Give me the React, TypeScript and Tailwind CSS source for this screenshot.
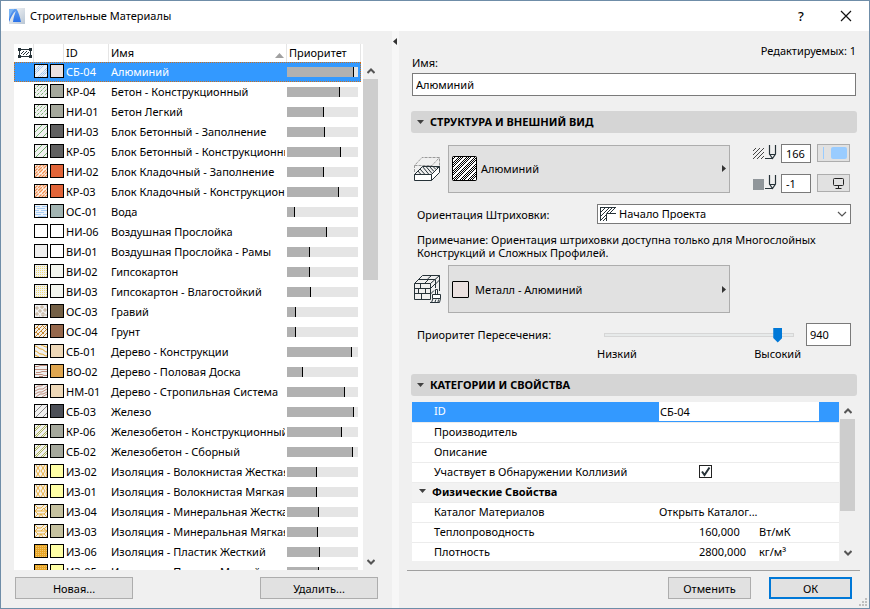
import React, { useState } from 'react';

type HatchKind =
  | 'metal' | 'concrete' | 'block' | 'brick' | 'water' | 'empty' | 'plain' | 'dots' | 'gravel'
  | 'soil' | 'timber' | 'floor' | 'rafter' | 'iron' | 'reinforced' | 'fiber' | 'mineral' | 'plastic';

const HATCHES: Record<HatchKind, { bg: string; ink: string; d: string; width?: number; dash?: string }> = {
  metal: { bg: '#eef2f8', ink: '#8dbcf0', d: 'M-1 6L6 -1M-1 8L8 -1M-1 10L10 -1M2 13L13 2M4 13L13 4M6 13L13 6M10 13L13 10', dash: '1.4 .5' },
  concrete: { bg: '#f0f0f0', ink: '#5aa04c', d: 'M-1 5L5 -1M-1 9L9 -1M-1 13L13 -1M3 13L13 3M7 13L13 7', dash: '3 1.4', width: 0.8 },
  block: { bg: '#f0f0f0', ink: '#4f9e48', d: 'M0 7L7 0M1 12L12 1M8 12L12 8', width: 0.8 },
  brick: { bg: '#fdf1e8', ink: '#f08a4b', d: 'M-1 4L4 -1M-1 7L7 -1M-1 10L10 -1M0 12L12 0M3 13L13 3M6 13L13 6M9 13L13 9', dash: '5 1', width: 1.2 },
  water: { bg: '#edf3fa', ink: '#a8cef6', d: 'M0 1.5H5M7 1.5H12M2 3.5H10M0 5.5H4M6 5.5H12M1 7.5H9M0 9.5H6M8 9.5H12M3 11.5H11' },
  empty: { bg: '#ffffff', ink: '#ffffff', d: '' },
  plain: { bg: '#efefef', ink: '#efefef', d: '' },
  dots: { bg: '#f2f2ee', ink: '#f0d75c', d: 'M1 1.5H12M1 3.5H12M1 5.5H12M1 7.5H12M1 9.5H12M1 11.5H12', dash: '1 1', width: 0.8 },
  gravel: { bg: '#f0f0f0', ink: '#b9a288', d: 'M1 2h2v2h-2zM6 1h2v2h-2zM9 4h2v2h-2zM4 5h2v2h-2zM1 8h2v2h-2zM7 8h2v3h-2zM4 11h1M11 1h1M11 9v2', width: 0.8 },
  soil: { bg: '#f5efe6', ink: '#c07a1c', d: 'M0 4L4 0M0 8L8 0M0 12L12 0M4 12L12 4M8 12L12 8M2 2l3 3M6 6l3 3M8 1l3 3M1 7l3 3', width: 0.9 },
  timber: { bg: '#f0f0f0', ink: '#eaa92b', d: 'M0 1c3 0 3 3 6 3s3 3 6 3M0 6c3 0 3 3 6 3s3 2 6 2M6 0c2 0 3 2 6 2M0 10l4 2' },
  floor: { bg: '#f0f0f0', ink: '#b98272', d: 'M0 1.5h3l2-1h7M0 4.5h12M1 7.5h4l2-1h5M0 9.5h7l2 1h3M4 11.5h4', width: 0.9 },
  rafter: { bg: '#f0f0f0', ink: '#b98272', d: 'M0 3l3-2h3l2-1M0 6l4-2h4l4-3M0 9l4-2h3l5-3M1 12l4-3h3l4-2M7 12l5-3', width: 0.9 },
  iron: { bg: '#f0f0f0', ink: '#707070', d: 'M0 7L7 0M1 12L12 1M8 12L12 8', width: 0.8 },
  reinforced: { bg: '#f0f0f0', ink: '#8f9c20', d: 'M0 4L4 0M0 6L6 0M0 11L11 0M1 12L12 1M6 12L12 6M8 12L12 8', width: 0.7 },
  fiber: { bg: '#f5f0e6', ink: '#e9ab36', d: 'M1 0l2 3-2 3 2 3-2 3M5 0l-2 3 2 3-2 3 2 3M6 0l2 3-2 3 2 3-2 3M10 0l-2 3 2 3-2 3 2 3M12 0l-1 3 1 3-1 3 1 3', width: 0.9 },
  mineral: { bg: '#f5f0e6', ink: '#e9ab36', d: 'M0 0l3 3h3l3-3M12 1L9 4l3 2M0 6l3-3M0 6h12M3 9L0 6M3 9h6l3-3M3 9l-3 3M9 9l3 3M6 6l3-3M4 12l2-3 2 3', width: 0.9 },
  plastic: { bg: '#e8a628', ink: '#f6dc9a', d: 'M1 1.5H12M1 3.5H12M1 5.5H12M1 7.5H12M1 9.5H12M1 11.5H12', dash: '1 1', width: 0.6 },
};

type Material = { id: string; name: string; hatch: HatchKind; surface: string; priority: number };

const MATERIALS: Material[] = [
  { id: 'СБ-04', name: 'Алюминий', hatch: 'metal', surface: '#ebe1e0', priority: 94 },
  { id: 'КР-04', name: 'Бетон - Конструкционный', hatch: 'concrete', surface: '#a5a89c', priority: 75 },
  { id: 'НИ-01', name: 'Бетон Легкий', hatch: 'concrete', surface: '#a5a89c', priority: 52 },
  { id: 'НИ-03', name: 'Блок Бетонный - Заполнение', hatch: 'block', surface: '#606060', priority: 54 },
  { id: 'КР-05', name: 'Блок Бетонный - Конструкционный', hatch: 'block', surface: '#606060', priority: 76 },
  { id: 'НИ-02', name: 'Блок Кладочный - Заполнение', hatch: 'brick', surface: '#e06438', priority: 52 },
  { id: 'КР-03', name: 'Блок Кладочный - Конструкционный', hatch: 'brick', surface: '#e06438', priority: 73 },
  { id: 'ОС-01', name: 'Вода', hatch: 'water', surface: '#a2b4b2', priority: 11 },
  { id: 'НИ-06', name: 'Воздушная Прослойка', hatch: 'empty', surface: '#ffffff', priority: 56 },
  { id: 'ВИ-01', name: 'Воздушная Прослойка - Рамы', hatch: 'plain', surface: '#ffffff', priority: 32 },
  { id: 'ВИ-02', name: 'Гипсокартон', hatch: 'dots', surface: '#f3f5ee', priority: 32 },
  { id: 'ВИ-03', name: 'Гипсокартон - Влагостойкий', hatch: 'dots', surface: '#f3f5ee', priority: 34 },
  { id: 'ОС-03', name: 'Гравий', hatch: 'gravel', surface: '#735f45', priority: 13 },
  { id: 'ОС-04', name: 'Грунт', hatch: 'soil', surface: '#96684c', priority: 13 },
  { id: 'СБ-01', name: 'Дерево - Конструкции', hatch: 'timber', surface: '#eed8b8', priority: 92 },
  { id: 'ВО-02', name: 'Дерево - Половая Доска', hatch: 'floor', surface: '#dfa650', priority: 23 },
  { id: 'НМ-01', name: 'Дерево - Стропильная Система', hatch: 'rafter', surface: '#eed8b8', priority: 82 },
  { id: 'СБ-03', name: 'Железо', hatch: 'iron', surface: '#4c4f57', priority: 94 },
  { id: 'КР-06', name: 'Железобетон - Конструкционный', hatch: 'reinforced', surface: '#a5a89c', priority: 78 },
  { id: 'СБ-02', name: 'Железобетон - Сборный', hatch: 'reinforced', surface: '#a5a89c', priority: 93 },
  { id: 'ИЗ-02', name: 'Изоляция - Волокнистая Жесткая', hatch: 'fiber', surface: '#ffffa6', priority: 42 },
  { id: 'ИЗ-01', name: 'Изоляция - Волокнистая Мягкая', hatch: 'fiber', surface: '#ffffa6', priority: 42 },
  { id: 'ИЗ-04', name: 'Изоляция - Минеральная Жесткая', hatch: 'mineral', surface: '#c6c2a0', priority: 45 },
  { id: 'ИЗ-03', name: 'Изоляция - Минеральная Мягкая', hatch: 'mineral', surface: '#c6c2a0', priority: 44 },
  { id: 'ИЗ-06', name: 'Изоляция - Пластик Жесткий', hatch: 'plastic', surface: '#ffffa6', priority: 47 },
  { id: 'ИЗ-05', name: 'Изоляция - Пластик Мягкий', hatch: 'plastic', surface: '#ffffa6', priority: 45 },
];

function HatchSwatch({ kind }: { kind: HatchKind }) {
  const h = HATCHES[kind];
  return (
    <svg viewBox="0 0 12 12" className="size-[14px] shrink-0 border border-black" style={{ background: h.bg }} aria-hidden="true">
      <path d={h.d} fill="none" stroke={h.ink} strokeWidth={h.width ?? 1} strokeDasharray={h.dash} />
    </svg>
  );
}

function TitleLogo() {
  return (
    <svg viewBox="0 0 16 16" className="size-4" aria-hidden="true">
      <defs>
        <linearGradient id="logoBg" x1="0" y1="0" x2="1" y2="1">
          <stop offset="0" stopColor="#fbfbfb" />
          <stop offset="1" stopColor="#b9c6d4" />
        </linearGradient>
        <linearGradient id="logoBlue" x1="0" y1="0" x2="0" y2="1">
          <stop offset="0" stopColor="#5f9ff0" />
          <stop offset="1" stopColor="#2b72e8" />
        </linearGradient>
      </defs>
      <rect width="16" height="16" fill="url(#logoBg)" />
      <path d="M0 1h5C2.500 4 1 8 0 13z" fill="#79b4f4" />
      <path d="M5 1h2.500C9.500 4 11 9 12 14H4C4.500 9 6 5 7 3 4 5 2 9 0 14V11C1 7 3 3 5 1z" fill="url(#logoBlue)" />
    </svg>
  );
}

function FillColumnIcon() {
  return (
    <svg viewBox="0 0 14 12" className="h-3 w-[14px]" fill="none" stroke="#263238" aria-hidden="true">
      <path d="M1 2.500H13M1 9.500H13M1.500 2V10M12.500 2V10" />
      <path d="M0 1h3v3H0zM11 1h3v3h-3zM0 8h3v3H0zM11 8h3v3h-3z" fill="#263238" stroke="none" />
      <path d="M3 7L6 4M5 8L9 4M8 8L11 5" />
    </svg>
  );
}

function CutFillIcon() {
  return (
    <svg viewBox="1 0 26 26" className="size-[26px] shrink-0" fill="none" stroke="#263238" aria-hidden="true">
      <path d="M1.500 16V9.500L9 1.500H26.500V10M1.500 9.500H19L26.500 1.500M19 9.500V13" stroke="#9a9a9a" strokeDasharray="3 1" />
      <path d="M1.500 18.500H18.500V24.500H1.500zM18.500 18.500L26.500 10.500V16.500L18.500 24.500" fill="#fff" />
      <path d="M1.500 18.500L9.500 10.500H26.500L18.500 18.500z" fill="#f0f0f0" />
      <path d="M5 15L8 18.500M7 13L12 18.500M9.500 10.500L16 18.500M13 10.500L19 17.500M16.500 10.500L21 15.500M20 10.500L23 13.500M23 10.500L25 12" />
    </svg>
  );
}

function SurfaceIcon() {
  return (
    <svg viewBox="1 0 27 30" className="h-[30px] w-[27px] shrink-0" fill="none" stroke="#263238" aria-hidden="true">
      <path d="M1.500 9.500H17.500V25.500H1.500zM1.500 9.500L9.500 1.500H26.500L17.500 9.500M1.500 14.500H17.500M1.500 19.500H17.500M7.500 9.500V14.500M12.500 14.500V19.500M5.500 14.500V19.500M8.500 19.500V25.500M5.500 5.500H22M12 9L15.500 5.500M14.500 5L18 2M26.500 1.500V17M17.500 14.500L22 10M22.500 5.500V14M22 10.500L26.500 6M17.500 20L21 16.500" />
      <path d="M22.500 20V15.500H24.500V20M19.500 20.500H27.500V24.500H19.500zM20 24.500L18.500 28.500M17 28.500H26.500L27.500 24.500M22 28L23 25.500M25 28L25.500 25.500" fill="#fff" />
    </svg>
  );
}

function PenIcon({ solid }: { solid?: boolean }) {
  return (
    <svg viewBox="0 0 24 16" className="h-4 w-6 shrink-0" fill="none" stroke="#263238" aria-hidden="true">
      {solid ? (
        <path d="M0 5h11v11H0z" fill="#90969a" stroke="none" />
      ) : (
        <path d="M0 7L3 4M0 11L7 4M0 15L11 4M4 15L11 8M8 15L11 12" stroke="#444" />
      )}
      <path d="M16.500 1V10L19.500 14.500L22.500 10V1M16.500 10.500H22.500M12 14.500H19.500" strokeWidth="1.200" />
    </svg>
  );
}

function Chevron({ dir }: { dir: 'up' | 'down' }) {
  return (
    <svg viewBox="0 0 8 6" className="h-[6px] w-2" fill="none" stroke="#555" strokeWidth="2" aria-hidden="true">
      <path d={dir === 'up' ? 'M.5 5L4 1.500L7.500 5' : 'M.5 1L4 4.500L7.500 1'} />
    </svg>
  );
}

function ScrollBar({ thumb, className }: { thumb: string; className: string }) {
  return (
    <div className={`flex w-[15px] shrink-0 flex-col bg-[#f0f0f0] ${className}`}>
      <button type="button" aria-label="Прокрутить вверх" className="flex h-[17px] shrink-0 items-center justify-center">
        <Chevron dir="up" />
      </button>
      <div className="min-h-0 flex-1">
        <div className={`bg-[#cdcdcd] ${thumb}`} />
      </div>
      <button type="button" aria-label="Прокрутить вниз" className="flex h-[17px] shrink-0 items-center justify-center">
        <Chevron dir="down" />
      </button>
    </div>
  );
}

function PushButton({ children, className }: { children: React.ReactNode; className: string }) {
  return (
    <button type="button" className={`flex h-[22px] items-center justify-center bg-[#e1e1e1] ${className}`}>
      {children}
    </button>
  );
}

function SectionHeader({ children }: { children: React.ReactNode }) {
  return (
    <h2>
      <button type="button" className="flex h-[22px] w-full items-center gap-[6px] rounded-[3px] bg-[#d5d5d5] px-[6px] pb-px text-left font-bold">
        <svg viewBox="0 0 7 4" className="h-1 w-[7px]" aria-hidden="true"><path d="M0 0h7L3.500 4z" fill="#404040" /></svg>
        {children}
      </button>
    </h2>
  );
}

function RightArrow() {
  return (
    <svg viewBox="0 0 4 7" className="h-[7px] w-1" aria-hidden="true"><path d="M0 0v7L4 3.500z" fill="#333" /></svg>
  );
}

function MaterialList({ selected, onSelect }: { selected: string; onSelect: (id: string) => void }) {
  return (
    <div className="flex min-h-0 flex-1">
      <div className="min-w-0 flex-1 overflow-hidden bg-white">
        <table className="w-[347px] table-fixed border-collapse">
          <colgroup>
            <col className="w-[19px]" />
            <col className="w-[30px]" />
            <col className="w-[45px]" />
            <col className="w-[178px]" />
            <col className="w-[75px]" />
          </colgroup>
          <thead>
            <tr className="h-[18px] text-left [&>th]:p-0 [&>th]:font-normal">
              <th aria-label="Штриховка"><div className="flex justify-end pr-px"><FillColumnIcon /></div></th>
              <th aria-label="Образец"><div className="h-[18px] border-l border-[#e5e5e5]" /></th>
              <th><div className="flex h-[18px] items-center border-l border-[#e5e5e5] pb-px pl-[2px]">ID</div></th>
              <th>
                <div className="flex h-[18px] items-center justify-between border-l border-[#e5e5e5] pr-[2px] pb-px pl-[2px]">
                  Имя
                  <svg viewBox="0 0 9 5" className="mt-[6px] h-[5px] w-[9px]" aria-hidden="true"><path d="M0 5h9L4.500 0z" fill="#a0a0a0" /></svg>
                </div>
              </th>
              <th><div className="flex h-[18px] items-center border-x border-[#e5e5e5] pb-px pl-[2px]">Приоритет</div></th>
            </tr>
          </thead>
          <tbody>
            {MATERIALS.map((m) => {
              const active = m.id === selected;
              return (
                <tr
                  key={m.id}
                  onClick={() => onSelect(m.id)}
                  className={`h-5 [&>td]:p-0 ${active ? 'bg-[#3399ff] text-white outline-1 -outline-offset-1 outline-dotted outline-[#c87020]' : ''}`}
                >
                  <td />
                  <td>
                    <div className="flex gap-[2px] pb-[2px] pl-px">
                      <HatchSwatch kind={m.hatch} />
                      <span className="size-[14px] shrink-0 border border-black" style={{ background: m.surface }} />
                    </div>
                  </td>
                  <td><div className="pb-[2px] pl-[3px] whitespace-nowrap">{m.id}</div></td>
                  <td><div className="mr-px overflow-hidden pb-[2px] pl-[3px] whitespace-nowrap">{m.name}</div></td>
                  <td>
                    <div className="mr-[3px] ml-px h-[10px] bg-[#e5e5e5]">
                      <div className="h-full border-r border-black bg-[#b1b1b1]" style={{ width: `${m.priority}%` }} />
                    </div>
                  </td>
                </tr>
              );
            })}
          </tbody>
        </table>
      </div>
      <ScrollBar className="pt-[18px]" thumb="h-[201px]" />
    </div>
  );
}

function PropertyTable() {
  const [clash, setClash] = useState(true);
  return (
    <div className="mt-[6px] mr-[2px] ml-px flex min-h-0 flex-1">
      <div className="min-w-0 flex-1 overflow-hidden bg-white">
        <table className="w-full table-fixed border-collapse [&_td]:p-0 [&_td]:pb-[2px] [&_th]:p-0 [&_th]:pb-[2px] [&_th]:pl-[22px] [&_th]:text-left [&_th]:font-normal [&_tr]:h-5 [&_tr]:border-b [&_tr]:border-[#ececec]">
          <colgroup>
            <col />
            <col className="w-10" />
            <col className="w-[60px]" />
            <col className="w-[80px]" />
          </colgroup>
          <tbody>
            <tr className="bg-[#3399ff]">
              <th scope="row" className="text-white"><label htmlFor="prop-id">ID</label></th>
              <td colSpan={3} className="pb-0!">
                <input id="prop-id" defaultValue="СБ-04" className="block h-[19px] w-40 bg-white pl-px outline-none" />
              </td>
            </tr>
            <tr><th scope="row">Производитель</th><td colSpan={3} /></tr>
            <tr><th scope="row">Описание</th><td colSpan={3} /></tr>
            <tr>
              <th scope="row"><label htmlFor="prop-clash">Участвует в Обнаружении Коллизий</label></th>
              <td />
              <td colSpan={2}>
                <div className="grid size-[13px] [&>*]:col-start-1 [&>*]:row-start-1">
                  <input id="prop-clash" type="checkbox" checked={clash} onChange={(e) => setClash(e.target.checked)} className="size-[13px] appearance-none border border-[#222] bg-white" />
                  {clash && (
                    <svg viewBox="0 0 13 13" className="pointer-events-none z-10 size-[13px]" fill="none" stroke="#263238" strokeWidth="2" aria-hidden="true">
                      <path d="M3 6.500L5.500 10L10.500 2.500" />
                    </svg>
                  )}
                </div>
              </td>
            </tr>
            <tr className="bg-[#f2f2f2]">
              <td colSpan={4}>
                <button type="button" className="flex items-center gap-[6px] pl-[7px] font-bold">
                  <svg viewBox="0 0 7 4" className="h-1 w-[7px]" aria-hidden="true"><path d="M0 0h7L3.500 4z" fill="#404040" /></svg>
                  Физические Свойства
                </button>
              </td>
            </tr>
            <tr>
              <th scope="row">Каталог Материалов</th>
              <td colSpan={3}><button type="button" className="block">Открыть Каталог...</button></td>
            </tr>
            <tr><th scope="row">Теплопроводность</th><td /><td>160,000</td><td>Вт/мК</td></tr>
            <tr><th scope="row">Плотность</th><td /><td>2800,000</td><td>кг/м³</td></tr>
          </tbody>
        </table>
      </div>
      <ScrollBar className="ml-px" thumb="h-[92px]" />
    </div>
  );
}

function StructurePanel() {
  const [priority, setPriority] = useState(940);
  return (
    <section>
      <SectionHeader>СТРУКТУРА И ВНЕШНИЙ ВИД</SectionHeader>
      <div className="pr-[6px] pl-[3px]">
        <div className="mt-[11px] flex justify-between pr-px">
          <div className="flex items-center">
            <div className="w-[34px]"><CutFillIcon /></div>
            <button type="button" className="flex h-12 w-[282px] items-center border border-[#adadad] bg-[#e1e1e1] pr-[3px] pb-px pl-[3px]">
              <svg viewBox="0 0 25 25" className="size-[25px]" aria-hidden="true">
                <defs>
                  <pattern id="metalHatch" width="8" height="8" patternUnits="userSpaceOnUse">
                    <path d="M-1 1L1 -1M-1 3L3 -1M-1 5L5 -1M-1 9L9 -1M1 9L9 1M3 9L9 3M7 9L9 7" stroke="#000" strokeWidth="1" />
                  </pattern>
                </defs>
                <rect x=".5" y=".5" width="24" height="24" rx="1" fill="#fff" />
                <rect x=".5" y=".5" width="24" height="24" rx="1" fill="url(#metalHatch)" stroke="#000" />
              </svg>
              <span className="ml-1 flex-1 text-left">Алюминий</span>
              <RightArrow />
            </button>
          </div>
          <div className="flex flex-col gap-[11px]">
            <div className="flex h-[19px] items-start">
              <PenIcon />
              <input aria-label="Перо штриховки" defaultValue="166" className="ml-1 h-[19px] w-[30px] border border-[#7a7a7a] bg-white pl-1 outline-none" />
              <button type="button" aria-label="Цвет пера" className="ml-[6px] flex h-[18px] w-[33px] items-center border border-[#adadad] bg-[#e1e1e1] pl-[5px]">
                <span className="h-3 w-px bg-[#99ccff]" />
                <span className="ml-[7px] h-3 w-4 rounded-[2px] bg-[#99ccff]" />
              </button>
            </div>
            <div className="flex h-[19px] items-start">
              <PenIcon solid />
              <input aria-label="Перо фона" defaultValue="-1" className="ml-1 h-[19px] w-[30px] border border-[#7a7a7a] bg-white pl-1 outline-none" />
              <button type="button" aria-label="Цвет фона" className="ml-[6px] flex h-[18px] w-[33px] items-center justify-end border border-[#adadad] bg-[#e1e1e1] pr-[5px]">
                <svg viewBox="0 0 11 11" className="size-[11px]" fill="none" stroke="#222" aria-hidden="true">
                  <rect x=".5" y=".5" width="10" height="7" rx="1" /><path d="M5.500 8V10M2.500 10.500H8.500" />
                </svg>
              </button>
            </div>
          </div>
        </div>

        <div className="mt-[11px] flex items-center justify-between pl-[3px]">
          <label htmlFor="fill-orientation">Ориентация Штриховки:</label>
          <div className="relative w-[254px]">
            <select id="fill-orientation" className="block h-5 w-full appearance-none border border-[#7a7a7a] bg-white pb-px pl-[21px] outline-none">
              <option>Начало Проекта</option>
            </select>
            <svg viewBox="0 0 16 14" className="pointer-events-none absolute top-[3px] left-[3px] h-[14px] w-4" fill="none" stroke="#263238" aria-hidden="true">
              <path d="M0 .5H16M.5 0V14M6.500 14V6.500H16" />
              <path d="M1 5L5 1M1 9L9 1M1 13L6 8M7 6L12 1M10 6L15 1M3 14L6 11" />
            </svg>
            <svg viewBox="0 0 10 6" className="pointer-events-none absolute top-[7px] right-[4px] h-[6px] w-[10px]" fill="none" stroke="#555" aria-hidden="true">
              <path d="M1 1L5 5L9 1" strokeWidth="1.200" />
            </svg>
          </div>
        </div>

        <p className="mt-[9px] w-[420px] pl-[3px]">
          Примечание: Ориентация штриховки доступна только для Многослойных Конструкций и Сложных Профилей.
        </p>

        <div className="mt-[6px] flex items-center">
          <div className="w-[34px]"><SurfaceIcon /></div>
          <button type="button" className="flex h-12 w-[282px] items-center border border-[#adadad] bg-[#e1e1e1] pr-[3px] pl-[3px]">
            <span className="size-[17px] rounded-[1px] border border-black bg-[#ebe1e0]" />
            <span className="ml-[6px] flex-1 text-left">Металл - Алюминий</span>
            <RightArrow />
          </button>
        </div>

        <div className="mt-[10px] flex h-[23px] items-center pl-[3px]">
          <label htmlFor="priority" className="flex-1">Приоритет Пересечения:</label>
          <input
            id="priority"
            type="range"
            min={0}
            max={1000}
            value={priority}
            onChange={(e) => setPriority(Number(e.target.value))}
            className="h-[15px] w-[190px] appearance-none bg-transparent outline-none [&::-webkit-slider-runnable-track]:h-1 [&::-webkit-slider-runnable-track]:border [&::-webkit-slider-runnable-track]:border-[#d6d6d6] [&::-webkit-slider-runnable-track]:bg-[#e7eaea] [&::-webkit-slider-thumb]:-mt-[6px] [&::-webkit-slider-thumb]:h-[15px] [&::-webkit-slider-thumb]:w-[9px] [&::-webkit-slider-thumb]:appearance-none [&::-webkit-slider-thumb]:bg-[#0078d7] [&::-webkit-slider-thumb]:[clip-path:polygon(0_0,100%_0,100%_70%,50%_100%,0_70%)]"
          />
          <input aria-label="Значение приоритета" value={priority} onChange={(e) => setPriority(Number(e.target.value) || 0)} className="ml-3 h-[23px] w-[45px] border border-[#7a7a7a] bg-white pl-[3px] outline-none" />
        </div>
        <div className="mt-px flex justify-between pr-[50px] pl-[183px]">
          <span>Низкий</span>
          <span>Высокий</span>
        </div>
      </div>
    </section>
  );
}

export default function App() {
  const [selected, setSelected] = useState('СБ-04');
  return (
    <div className="flex h-screen flex-col overflow-hidden border border-[#6f8da8] bg-[#f0f0f0] font-['Noto_Sans','Open_Sans',sans-serif] text-[11px] leading-[13px] text-black">
      <header className="flex h-[30px] shrink-0 items-center bg-white pr-[17px] pl-2">
        <TitleLogo />
        <h1 className="ml-[5px] flex-1 text-[11px] leading-4">Строительные Материалы</h1>
        <button type="button" aria-label="Справка" className="w-5 text-[13px] leading-4 font-medium">?</button>
        <button type="button" aria-label="Закрыть" className="ml-[29px]">
          <svg viewBox="0 0 12 12" className="size-3" stroke="#111" strokeWidth="1.200" aria-hidden="true"><path d="M1 1L11 11M11 1L1 11" /></svg>
        </button>
      </header>

      <div className="flex min-h-0 flex-1">
        <aside className="flex w-[391px] shrink-0 flex-col pt-[13px] pr-[14px] pb-[9px] pl-[13px]">
          <MaterialList selected={selected} onSelect={setSelected} />
          <div className="mt-[7px] flex shrink-0 justify-between pl-px">
            <PushButton className="w-[118px] border border-[#adadad]">Новая...</PushButton>
            <PushButton className="w-[118px] border border-[#adadad]">Удалить...</PushButton>
          </div>
        </aside>

        <button type="button" aria-label="Свернуть список" className="flex w-[7px] shrink-0 items-start bg-[#f7f7f7] pt-[7px] pl-px">
          <svg viewBox="0 0 4 7" className="h-[7px] w-1" aria-hidden="true"><path d="M4 0v7L0 3.500z" fill="#333" /></svg>
        </button>

        <main className="flex min-w-0 flex-1 flex-col pb-[9px]">
          <div className="flex min-h-0 flex-1 flex-col px-3 pt-[14px]">
            <p className="pr-px text-right leading-3">Редактируемых: 1</p>
            <label htmlFor="material-name" className="pl-px leading-3">Имя:</label>
            <input id="material-name" defaultValue="Алюминий" className="mx-px mt-1 mb-[15px] h-[23px] shrink-0 border border-[#7a7a7a] bg-white pl-[3px] outline-none" />
            <StructurePanel />
            <section className="mt-[14px] flex min-h-0 flex-1 flex-col">
              <SectionHeader>КАТЕГОРИИ И СВОЙСТВА</SectionHeader>
              <PropertyTable />
            </section>
          </div>
          <div className="mt-[9px] mr-[9px] ml-2 h-px shrink-0 bg-[#a0a0a0]" />
          <div className="mt-[6px] flex shrink-0 justify-end gap-[18px] pr-[17px]">
            <PushButton className="w-[83px] border border-[#adadad]">Отменить</PushButton>
            <PushButton className="w-[83px] border-2 border-[#0078d7]">ОК</PushButton>
          </div>
        </main>
      </div>

      <svg viewBox="0 0 8 8" className="pointer-events-none absolute right-[3px] bottom-[3px] size-2" fill="#bfbfbf" aria-hidden="true">
        <path d="M6 0h2v2H6zM3 3h2v2H3zM6 3h2v2H6zM0 6h2v2H0zM3 6h2v2H3zM6 6h2v2H6z" />
      </svg>
    </div>
  );
}
